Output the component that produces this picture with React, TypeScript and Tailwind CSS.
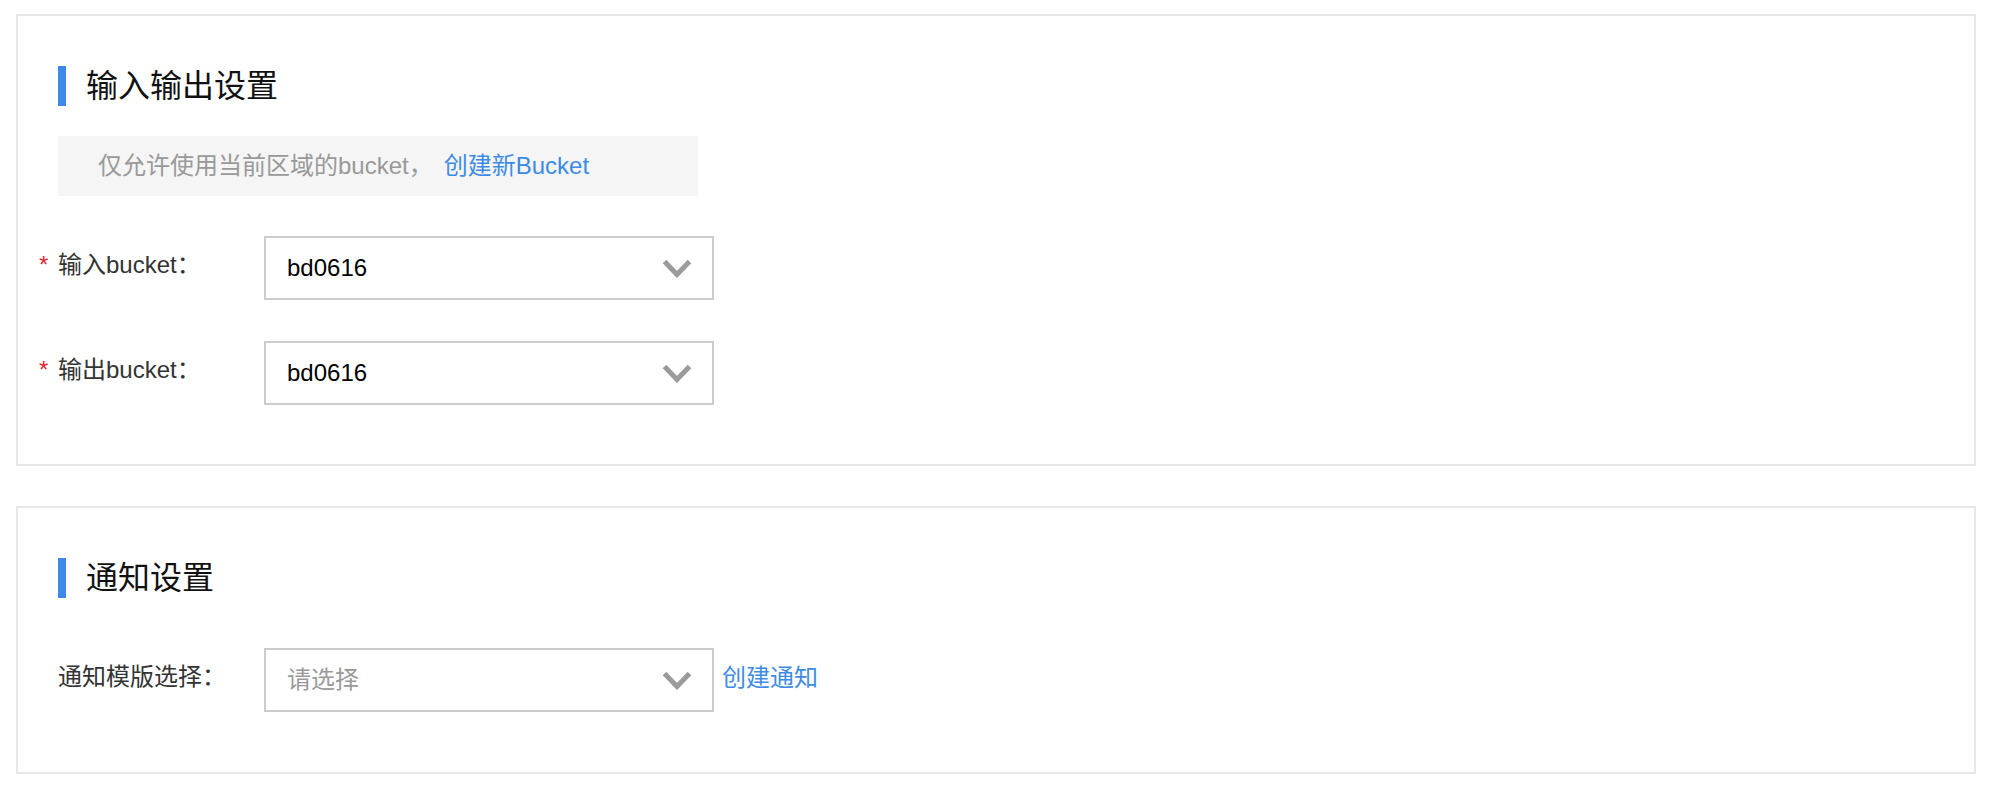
import React from 'react'

const font = "font-['Liberation_Sans','Noto_Sans_CJK_SC',sans-serif]"

const Chevron: React.FC = () => (
  <svg width="30" height="19" viewBox="0 0 30 19" className="shrink-0">
    <polyline points="2.5,2.5 15,15.5 27.5,2.5" fill="none" stroke="#9b9b9b" strokeWidth="5" strokeLinejoin="miter" />
  </svg>
)

const SectionTitle: React.FC<{ title: string }> = ({ title }) => (
  <div className="flex items-center h-[40px]">
    <div className="w-[8px] h-[40px] bg-[#3d8be6]" />
    <h2 className="ml-[20px] text-[32px] leading-[40px] text-[#111] font-normal">{title}</h2>
  </div>
)

const SelectBox: React.FC<{ value?: string; placeholder?: string }> = ({ value, placeholder }) => (
  <div className="w-[450px] h-[64px] border-2 border-[#cccccc] bg-white pl-[21px] pr-[20px] flex items-center justify-between">
    {value ? (
      <span className="text-[24px] text-black">{value}</span>
    ) : (
      <span className="text-[24px] text-[#999]">{placeholder}</span>
    )}
    <Chevron />
  </div>
)

const FormRow: React.FC<{ label: string; required?: boolean; children: React.ReactNode; className?: string }> = ({
  label,
  required,
  children,
  className = '',
}) => (
  <div className={`flex items-center ${className}`}>
    <div className="relative w-[206px] shrink-0 mb-[6px] text-[24px] text-[#333]">
      {required && <span className="absolute -left-[19px] top-0 text-[24px] text-[#e0282e]">*</span>}
      {label}
    </div>
    {children}
  </div>
)

const App: React.FC = () => {
  return (
    <div className={`min-h-screen bg-white pl-[16px] pr-[22px] pt-[14px] pb-[16px] ${font}`}>
      <div className="flex flex-col gap-[40px]">
        {/* 输入输出设置 */}
        <section className="border-2 border-[#e8e8e8] pt-[50px] pb-[59px] px-[40px]">
          <SectionTitle title="输入输出设置" />
          <div className="mt-[30px] w-[640px] h-[60px] bg-[#f5f5f5] pl-[40px] flex items-center text-[24px]">
            <span className="text-[#999]">仅允许使用当前区域的bucket，</span>
            <a className="ml-[11px] text-[#3d8be6] cursor-pointer">创建新Bucket</a>
          </div>
          <FormRow label="输入bucket：" required className="mt-[40px]">
            <SelectBox value="bd0616" />
          </FormRow>
          <FormRow label="输出bucket：" required className="mt-[41px]">
            <SelectBox value="bd0616" />
          </FormRow>
        </section>

        {/* 通知设置 */}
        <section className="border-2 border-[#e8e8e8] pt-[50px] pb-[60px] px-[40px]">
          <SectionTitle title="通知设置" />
          <FormRow label="通知模版选择：" className="mt-[50px]">
            <SelectBox placeholder="请选择" />
            <a className="ml-[8px] mb-[4px] text-[24px] text-[#3d8be6] cursor-pointer">创建通知</a>
          </FormRow>
        </section>
      </div>
    </div>
  )
}

export default App
